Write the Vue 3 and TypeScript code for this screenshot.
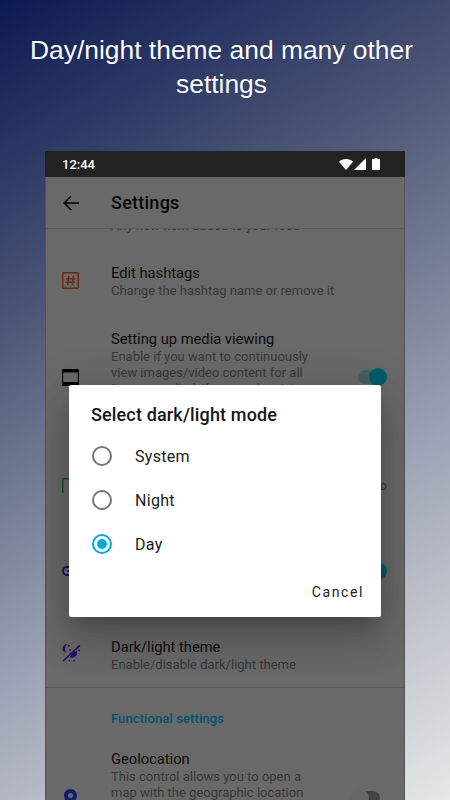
<script setup lang="ts">
const options = [
  { label: "System", checked: false },
  { label: "Night", checked: false },
  { label: "Day", checked: true },
];
</script>

<template>
  <div class="page">
    <h1 class="headline">Day/night theme and many other settings</h1>
    <div class="phone">
      <div class="statusbar">
        <span class="clock">12:44</span>
        <div class="status-icons">
          <svg width="14" height="11" viewBox="0 0 14 11"><path d="M0 2.8C1.8 1 4.2 0 7 0s5.2 1 7 2.8L7 11z" fill="#fff" /></svg>
          <svg class="signal" width="12" height="12" viewBox="0 0 12 12"><path d="M12 0V12H0z" fill="#fff" /></svg>
          <svg width="8" height="12" viewBox="0 0 8 12"><path d="M2.6 0H5.4V1H7C7.6 1 8 1.4 8 2V11C8 11.6 7.6 12 7 12H1C0.4 12 0 11.6 0 11V2C0 1.4 0.4 1 1 1H2.6z" fill="#fff" /></svg>
        </div>
      </div>
      <div class="screen">
        <header class="appbar">
          <svg class="back" width="24" height="24" viewBox="0 0 24 24"><path d="M20 11.2H7.2l5.4-5.6-1-1L4 12l7.6 7.4 1-1-5.4-5.6H20z" fill="#000" /></svg>
          <span class="appbar-title">Settings</span>
        </header>
        <div class="list">
          <div class="clipped-line">Any new item added to your feed</div>

          <div class="row hash-row">
            <div class="row-icon">
              <svg width="17" height="17" viewBox="0 0 17 17" fill="none" stroke="#ff6a2c" stroke-width="1.5">
                <rect x="0.75" y="0.75" width="15.5" height="15.5" rx="0.8" />
                <path d="M6.7 4L5.8 13M11.2 4L10.3 13M3.8 6.8H13.4M3.6 10.2H13.2" />
              </svg>
            </div>
            <div class="row-text">
              <div class="row-title">Edit hashtags</div>
              <div class="row-sub">Change the hashtag name or remove it</div>
            </div>
          </div>

          <div class="row media-row">
            <div class="row-icon">
              <svg width="17" height="17" viewBox="0 0 17 17">
                <path d="M1.5 0H15.5C16.4 0 17 0.6 17 1.5V15.5C17 16.4 16.4 17 15.5 17H1.5C0.6 17 0 16.4 0 15.5V1.5C0 0.6 0.6 0 1.5 0ZM1.2 3.6V13H15.8V3.6Z" fill="#000" fill-rule="evenodd" />
              </svg>
            </div>
            <div class="row-text top-text">
              <div class="row-title">Setting up media viewing</div>
              <div class="row-sub">Enable if you want to continuously</div>
              <div class="row-sub">view images/video content for all</div>
              <div class="row-sub">items supplied, if any such exist</div>
            </div>
            <div class="switch on">
              <span class="track"></span>
              <span class="thumb"></span>
            </div>
          </div>

          <div class="row bracket-row">
            <div class="row-icon">
              <svg width="17" height="15" viewBox="0 0 17 15" fill="none" stroke="#1fd45c" stroke-width="1.5">
                <path d="M0.75 15V0.75H16" />
              </svg>
            </div>
            <span class="row-end">o</span>
          </div>

          <div class="row chain-row">
            <div class="row-icon">
              <svg width="20" height="10" viewBox="0 0 20 10" fill="none" stroke="#2a3cff" stroke-width="1.8">
                <path d="M8 1H5C2.7 1 1 2.8 1 5S2.7 9 5 9H8M12 1H15C17.3 1 19 2.8 19 5S17.3 9 15 9H12M5.5 5H14.5" />
              </svg>
            </div>
            <div class="switch on">
              <span class="track"></span>
              <span class="thumb"></span>
            </div>
          </div>

          <div class="row theme-row">
            <div class="row-icon theme-icon">
              <svg width="19" height="19" viewBox="0 0 19 19">
                <path d="M1 18L18 2.4" stroke="#5a20ff" stroke-width="1.5" fill="none" />
                <path d="M5 0.8C1.6 1.8 0 4.4 0.7 6.9 1.3 8.6 2.8 9.5 4.6 9.4 2.4 7.8 2.6 4 5 0.8Z" fill="#5a20ff" />
                <path d="M8 14.2C8.2 12 10.5 9.4 14.8 7.8 15.8 10.5 14.8 13 12.6 14 11 14.8 9.2 14.8 8 14.2Z" fill="#5a20ff" />
                <circle cx="6.8" cy="2.8" r="1" fill="#5a20ff" />
                <circle cx="8" cy="7" r="0.9" fill="#5a20ff" />
                <circle cx="17.2" cy="7.4" r="0.9" fill="#5a20ff" />
                <circle cx="7.4" cy="17.6" r="0.9" fill="#5a20ff" />
                <circle cx="12.2" cy="17.6" r="0.9" fill="#5a20ff" />
              </svg>
            </div>
            <div class="row-text">
              <div class="row-title">Dark/light theme</div>
              <div class="row-sub">Enable/disable dark/light theme</div>
            </div>
          </div>

          <div class="section-title">Functional settings</div>

          <div class="row geo-row">
            <div class="row-icon geo-icon">
              <svg width="13" height="18" viewBox="0 0 13 18"><path d="M6.5 0C2.9 0 0 2.9 0 6.5 0 11 6.5 18 6.5 18S13 11 13 6.5C13 2.9 10.1 0 6.5 0ZM6.5 9A2.5 2.5 0 1 1 6.5 4 2.5 2.5 0 0 1 6.5 9Z" fill="#2a4cff" fill-rule="evenodd" /></svg>
            </div>
            <div class="row-text">
              <div class="row-title">Geolocation</div>
              <div class="row-sub">This control allows you to open a</div>
              <div class="row-sub">map with the geographic location</div>
            </div>
            <div class="switch off geo-switch">
              <span class="track"></span>
              <span class="thumb"></span>
            </div>
          </div>
        </div>

        <div class="scrim"></div>
        <div class="dialog">
          <div class="dialog-title">Select dark/light mode</div>
          <div v-for="opt in options" :key="opt.label" class="option">
            <span class="radio" :class="{ checked: opt.checked }"></span>
            <span class="option-label">{{ opt.label }}</span>
          </div>
          <div class="dialog-actions">
            <span class="cancel">Cancel</span>
          </div>
        </div>
      </div>
    </div>
  </div>
</template>

<style>
html,
body {
  margin: 0;
  overflow: hidden;
}
</style>

<style scoped>
.page {
  width: 450px;
  height: 800px;
  box-sizing: border-box;
  overflow: hidden;
  background: linear-gradient(150deg, #0b1a52 0%, #4f5877 32%, #9ba1b3 64%, #e6e8e6 100%);
  display: flex;
  flex-direction: column;
  align-items: center;
  font-family: Roboto, sans-serif;
}

.headline {
  margin: 34px 7px 0 0;
  width: 410px;
  height: 117px;
  font-family: "Liberation Sans", Arial, sans-serif;
  font-size: 26.4px;
  line-height: 33.5px;
  font-weight: 400;
  text-align: center;
  color: #fff;
  text-shadow: 0 0 1px rgba(10, 20, 70, 0.8);
}

.phone {
  width: 360px;
  flex: 1;
  display: flex;
  flex-direction: column;
  min-height: 0;
}

.statusbar {
  height: 26px;
  flex: none;
  background: #222;
  display: flex;
  align-items: center;
  justify-content: space-between;
  padding: 0 25px 0 17px;
  color: #fff;
}

.clock {
  font-size: 13px;
  font-weight: 500;
}

.status-icons {
  display: flex;
  align-items: center;
  gap: 1px;
}

.signal {
  margin-right: 5px;
}

.screen {
  flex: 1;
  position: relative;
  overflow: hidden;
  background: #fff;
  display: flex;
  flex-direction: column;
  min-height: 0;
}

.appbar {
  height: 52px;
  flex: none;
  display: flex;
  align-items: center;
  padding-left: 14px;
  border-bottom: 1px solid #dcdcdc;
  box-sizing: border-box;
  background: #fff;
  position: relative;
  z-index: 1;
}

.back {
  margin-right: 28px;
}

.appbar-title {
  font-size: 18px;
  font-weight: 500;
  letter-spacing: 0.25px;
  color: #111;
}

.list {
  flex: 1;
  min-height: 0;
  overflow: hidden;
}

.clipped-line {
  margin: -11px 0 13px 66px;
  height: 16px;
  font-size: 13px;
  line-height: 16px;
  color: #8a8a8a;
}

.row {
  display: flex;
  align-items: center;
  position: relative;
  box-sizing: border-box;
  padding-left: 17px;
}

.row-icon {
  width: 49px;
  flex: none;
  display: flex;
  align-items: center;
}

.row-text {
  flex: 1;
}

.top-text {
  align-self: flex-start;
  margin-top: 15px;
}

.row-title {
  font-size: 14.7px;
  line-height: 20px;
  color: #1c1c1c;
}

.row-sub {
  font-size: 13px;
  line-height: 16px;
  color: #8a8a8a;
}

.hash-row {
  height: 67px;
}

.media-row {
  height: 126px;
}

.bracket-row {
  height: 90px;
}

.chain-row {
  height: 82px;
}

.row-end {
  position: absolute;
  right: 18px;
  top: 50%;
  transform: translateY(-50%);
  font-size: 13px;
  color: #8a8a8a;
}

.switch {
  position: absolute;
  right: 18px;
  top: 50%;
  width: 36px;
  height: 18px;
  transform: translateY(-50%);
}

.track {
  position: absolute;
  left: 7px;
  right: 7px;
  top: 2px;
  height: 14px;
  border-radius: 7px;
}

.thumb {
  position: absolute;
  top: 0;
  width: 18px;
  height: 18px;
  border-radius: 50%;
}

.switch.on .track {
  background: #b4e6f0;
}

.switch.on .thumb {
  right: 0;
  background: #00e0ff;
}

.switch.off .track {
  background: #a8a8a8;
}

.switch.off .thumb {
  left: 0;
  background: #fafafa;
  box-shadow: 0 1px 2px rgba(0, 0, 0, 0.35);
}

.theme-row {
  height: 76px;
  padding-top: 10px;
  border-bottom: 1px solid #dcdcdc;
}

.theme-icon {
  margin-top: -4px;
}

.section-title {
  height: 61px;
  line-height: 61px;
  padding-left: 66px;
  font-size: 13px;
  font-weight: 500;
  letter-spacing: 0.1px;
  color: #00ccff;
}

.geo-row {
  align-items: flex-start;
  height: 100px;
}

.geo-icon {
  padding-top: 40px;
  padding-left: 2px;
  box-sizing: border-box;
}

.geo-switch {
  right: 25px;
  top: 49px;
  width: 29px;
}

.geo-switch .track {
  left: 7px;
  right: 0;
}

.scrim {
  position: absolute;
  inset: 0;
  z-index: 2;
  background: rgba(0, 0, 0, 0.59);
  box-shadow: inset 1px 0 0 rgba(0, 0, 0, 0.2), inset -1px 0 0 rgba(0, 0, 0, 0.2);
}

.dialog {
  position: absolute;
  z-index: 3;
  left: 24px;
  top: 208px;
  width: 312px;
  height: 232px;
  box-sizing: border-box;
  background: #fff;
  border-radius: 2px;
  padding: 0 17px 0 23px;
  box-shadow: 0 11px 15px -7px rgba(0, 0, 0, 0.2), 0 24px 38px 3px rgba(0, 0, 0, 0.14), 0 9px 46px 8px rgba(0, 0, 0, 0.12);
}

.dialog-title {
  margin: 17px 0 6px -1px;
  height: 26px;
  font-size: 18px;
  line-height: 26px;
  font-weight: 500;
  letter-spacing: 0.15px;
  color: #141414;
}

.option {
  height: 44px;
  display: flex;
  align-items: center;
}

.radio {
  width: 20px;
  height: 20px;
  box-sizing: border-box;
  border: 2px solid #757575;
  border-radius: 50%;
  margin-right: 23px;
  position: relative;
  flex: none;
}

.radio.checked {
  border-color: #03a9e0;
}

.radio.checked::after {
  content: "";
  position: absolute;
  inset: 3px;
  border-radius: 50%;
  background: #03a9e0;
}

.option-label {
  font-size: 16px;
  letter-spacing: 0.3px;
  color: #1a1a1a;
}

.dialog-actions {
  display: flex;
  justify-content: flex-end;
  margin-top: 18px;
}

.cancel {
  font-size: 14px;
  font-weight: 400;
  letter-spacing: 1.6px;
  color: #222;
}
</style>
